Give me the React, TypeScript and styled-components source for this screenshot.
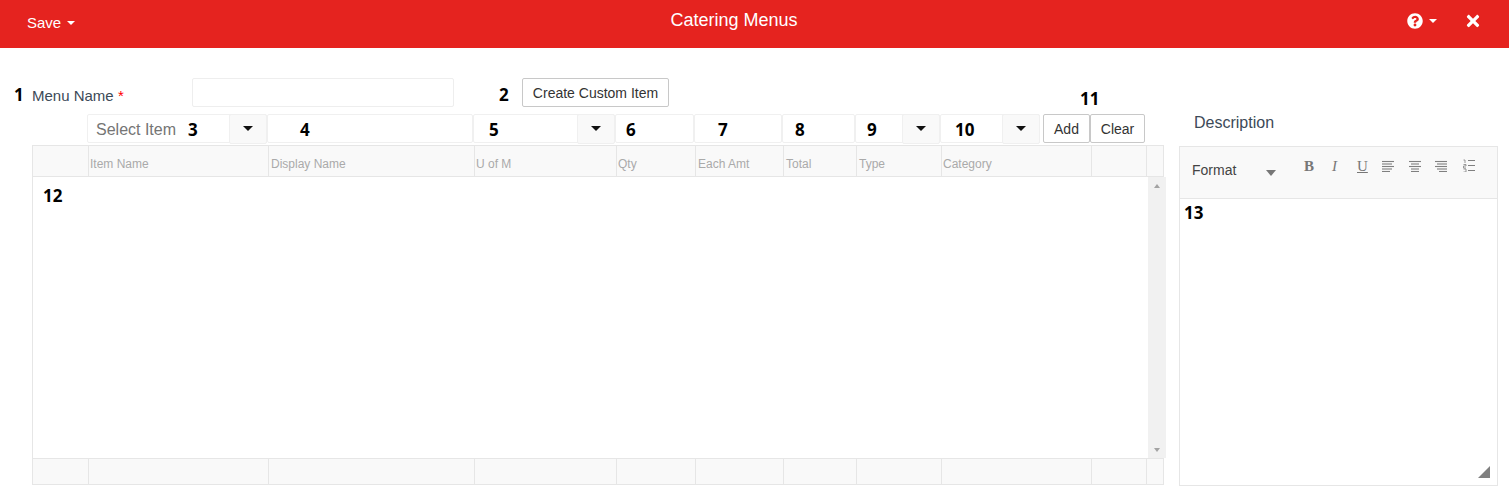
import styled, { createGlobalStyle } from 'styled-components';
import { FaQuestionCircle, FaTimes } from 'react-icons/fa';

const GlobalStyle = createGlobalStyle`
  html, body {
    margin: 0;
    padding: 0;
    background: #fff;
    font-family: "Liberation Sans", Arial, sans-serif;
    color: #333;
    overflow: hidden;
  }
`;

const Header = styled.header`
  height: 48px;
  background: #e5231f;
  color: #fff;
  display: grid;
  grid-template-columns: 1fr auto 1fr;
  align-items: center;
`;

const SaveMenu = styled.div`
  display: flex;
  align-items: center;
  gap: 6px;
  padding: 0 0 3px 27px;
  font-size: 15px;
`;

const Title = styled.h1`
  margin: -8px 0 0 -41px;
  font-size: 18px;
  font-weight: 400;
`;

const HeaderActions = styled.div`
  display: flex;
  justify-content: flex-end;
  align-items: center;
  padding: 0 27px 7px 0;
  font-size: 16px;
`;

const HelpMenu = styled.div`
  display: flex;
  align-items: center;
  gap: 6px;
  margin-right: 27px;
`;

const Caret = styled.span`
  display: inline-block;
  width: 0;
  height: 0;
  border-left: 4px solid transparent;
  border-right: 4px solid transparent;
  border-top: 4px solid #fff;
`;

const Content = styled.main`
  display: flex;
  padding: 30px 11px 0 14px;
`;

const Left = styled.div`
  width: 1150px;
  flex: none;
`;

const Right = styled.aside`
  margin: 68px 0 0 15px;
  flex: 1;
`;

const NameRow = styled.div`
  display: flex;
  align-items: center;
  height: 29px;
  margin-bottom: 7px;
`;

const Mark = styled.span`
  font-family: "Open Sans", "Liberation Sans", sans-serif;
  font-size: 17px;
  font-weight: 700;
  line-height: 1;
  color: #000;
`;

const NameMark = styled(Mark)`
  width: 18px;
  margin-top: 4px;
`;

const FieldMark = styled(Mark)`
  margin-top: 2px;
`;

const Label = styled.label`
  width: 160px;
  margin-top: 5px;
  font-size: 15px;
  color: #3c4a58;
`;

const Required = styled.span`
  color: #f00;
`;

const TextBox = styled.div`
  box-sizing: border-box;
  width: 262px;
  height: 29px;
  border: 1px solid #eee;
  border-radius: 2px;
`;

const CustomMark = styled(Mark)`
  width: 23px;
  margin: 4px 0 0 45px;
`;

const Button = styled.button<{ $w: number }>`
  box-sizing: border-box;
  height: 29px;
  padding: 0;
  width: ${(p) => p.$w}px;
  background: #fff;
  border: 1px solid #c8c8c8;
  border-radius: 2px;
  font: 14px "Liberation Sans", Arial, sans-serif;
  color: #333;
`;

const EntryRow = styled.div`
  display: flex;
  height: 30px;
  margin-left: 73px;
  margin-bottom: 1px;
`;

const Field = styled.div<{ $w: number; $pad: number }>`
  box-sizing: border-box;
  width: ${(p) => p.$w}px;
  height: 29px;
  flex: none;
  display: flex;
  align-items: center;
  padding-left: ${(p) => p.$pad}px;
  border: 1px solid #f0f0f0;
  border-radius: 2px;
`;

const Placeholder = styled.span`
  width: 92px;
  margin-top: 2px;
  font-size: 16px;
  color: #757575;
`;

const DropButton = styled.div`
  box-sizing: border-box;
  width: 38px;
  height: 30px;
  flex: none;
  margin-left: auto;
  margin-right: -1px;
  display: flex;
  align-items: center;
  justify-content: center;
  padding-bottom: 1px;
  background: #f9f9f9;
  border: 1px solid #f0f0f0;
  border-radius: 2px;
`;

const DarkCaret = styled.span`
  width: 0;
  height: 0;
  border-left: 5px solid transparent;
  border-right: 5px solid transparent;
  border-top: 5px solid #111;
`;

const AddGroup = styled.div`
  position: relative;
  display: flex;
  margin-left: 3px;
`;

const AddMark = styled(Mark)`
  position: absolute;
  left: 37px;
  top: -24px;
`;

const Grid = styled.section`
  box-sizing: border-box;
  width: 1132px;
  height: 340px;
  margin-left: 18px;
  border: 1px solid #e6e6e6;
  display: flex;
  flex-direction: column;
`;

const GridRow = styled.div<{ $h: number }>`
  display: flex;
  height: ${(p) => p.$h}px;
  flex: none;
  background: #f9f9f9;
`;

const HeadCell = styled.div<{ $w: number; $pad?: number }>`
  box-sizing: border-box;
  width: ${(p) => p.$w}px;
  flex: none;
  padding: 5px 0 0 ${(p) => p.$pad ?? 2}px;
  display: flex;
  align-items: center;
  border-right: 1px solid #e6e6e6;
  font-size: 12px;
  color: #aaa;
  &:last-child {
    border-right: 0;
  }
`;

const GridBody = styled.div`
  flex: 1;
  display: flex;
  border-top: 1px solid #e6e6e6;
  border-bottom: 1px solid #e6e6e6;
`;

const BodyArea = styled.div`
  flex: 1;
  padding: 10px 0 0 10px;
`;

const Scrollbar = styled.div`
  width: 18px;
  margin-right: -3px;
  background: #f1f1f1;
  display: flex;
  flex-direction: column;
  justify-content: space-between;
  align-items: center;
  padding: 7px 0 6px;
  box-sizing: border-box;
`;

const ScrollArrow = styled.span<{ $up?: boolean }>`
  width: 0;
  height: 0;
  border-left: 3.5px solid transparent;
  border-right: 3.5px solid transparent;
  ${(p) => (p.$up ? 'border-bottom: 4px solid #a3a3a3;' : 'border-top: 4px solid #a3a3a3;')}
`;

const DescriptionTitle = styled.div`
  height: 0;
  padding-left: 15px;
  font-size: 16px;
  position: relative;
  top: -32px;
  color: #3c4a58;
`;

const Editor = styled.section`
  box-sizing: border-box;
  width: 319px;
  height: 340px;
  border: 1px solid #e6e6e6;
  display: flex;
  flex-direction: column;
`;

const EditorToolbar = styled.div`
  box-sizing: border-box;
  height: 52px;
  flex: none;
  background: #f9f9f9;
  border-bottom: 1px solid #e6e6e6;
  display: flex;
  align-items: flex-start;
  padding-left: 12px;
`;

const FormatLabel = styled.span`
  width: 74px;
  margin-top: 15px;
  font-size: 14px;
  color: #444;
`;

const FormatCaret = styled.span`
  width: 0;
  height: 0;
  margin: 23px 27px 0 0;
  border-left: 5px solid transparent;
  border-right: 5px solid transparent;
  border-top: 6px solid #777;
`;

const ToolGlyph = styled.span<{ $w: number; $bold?: boolean; $italic?: boolean; $under?: boolean }>`
  width: ${(p) => p.$w}px;
  margin-top: 11px;
  padding-left: 1px;
  box-sizing: border-box;
  font-family: "Liberation Serif", "Times New Roman", serif;
  font-size: 15px;
  line-height: 16px;
  color: #777;
  font-weight: ${(p) => (p.$bold ? 700 : 400)};
  font-style: ${(p) => (p.$italic ? 'italic' : 'normal')};
  text-decoration: ${(p) => (p.$under ? 'underline' : 'none')};
`;

const ToolIcon = styled.svg`
  width: 13px;
  height: 13px;
  margin: 12px 13.5px 0 0;
  flex: none;
`;

const EditorBody = styled.div`
  flex: 1;
  position: relative;
  padding: 5px 0 0 4px;
`;

const ResizeGrip = styled.svg`
  position: absolute;
  right: 7px;
  bottom: 7px;
  width: 12px;
  height: 12px;
`;

const columns = [
  { w: 56, label: '' },
  { w: 180, label: 'Item Name', pad: 1 },
  { w: 206, label: 'Display Name' },
  { w: 142, label: 'U of M', pad: 1 },
  { w: 79, label: 'Qty', pad: 1 },
  { w: 88, label: 'Each Amt' },
  { w: 73, label: 'Total' },
  { w: 85, label: 'Type' },
  { w: 150, label: 'Category', pad: 1 },
  { w: 55, label: '' },
  { w: 16, label: '' },
];

const alignLines: Record<string, [number, number][]> = {
  left: [[0, 12], [0, 10], [0, 12], [0, 10], [0, 8]],
  center: [[0, 12], [2, 10], [0, 12], [2, 10], [2, 10]],
  right: [[0, 12], [2, 12], [0, 12], [2, 12], [4, 12]],
};

const AlignIcon = ({ kind }: { kind: string }) => (
  <ToolIcon viewBox="0 0 13 13">
    {alignLines[kind].map(([x1, x2], i) => (
      <line key={i} x1={x1} x2={x2} y1={2.5 + i * 2.5} y2={2.5 + i * 2.5} stroke="#808080" strokeWidth="1.1" />
    ))}
  </ToolIcon>
);

const ListIcon = () => (
  <ToolIcon viewBox="0 0 13 13">
    <path d="M1.5 1h1.5v3M1.5 5.5h2.5v1.5h-2.5v2h2.5M1.5 10h2.5v3h-2.5" fill="none" stroke="#808080" strokeWidth="0.8" />
    <line x1="6" x2="14" y1="1.5" y2="1.5" stroke="#808080" />
    <line x1="6" x2="14" y1="6.5" y2="6.5" stroke="#808080" />
    <line x1="6" x2="14" y1="11.5" y2="11.5" stroke="#808080" />
  </ToolIcon>
);

const App = () => (
  <>
    <GlobalStyle />
    <Header>
      <SaveMenu>
        Save <Caret />
      </SaveMenu>
      <Title>Catering Menus</Title>
      <HeaderActions>
        <HelpMenu>
          <FaQuestionCircle size={16} />
          <Caret />
        </HelpMenu>
        <FaTimes size={18} />
      </HeaderActions>
    </Header>
    <Content>
      <Left>
        <NameRow>
          <NameMark>1</NameMark>
          <Label>
            Menu Name <Required>*</Required>
          </Label>
          <TextBox />
          <CustomMark>2</CustomMark>
          <Button $w={147}>Create Custom Item</Button>
        </NameRow>
        <EntryRow>
          <Field $w={180} $pad={8}>
            <Placeholder>Select Item</Placeholder>
            <FieldMark>3</FieldMark>
            <DropButton>
              <DarkCaret />
            </DropButton>
          </Field>
          <Field $w={206} $pad={32}>
            <FieldMark>4</FieldMark>
          </Field>
          <Field $w={142} $pad={15}>
            <FieldMark>5</FieldMark>
            <DropButton>
              <DarkCaret />
            </DropButton>
          </Field>
          <Field $w={79} $pad={10}>
            <FieldMark>6</FieldMark>
          </Field>
          <Field $w={88} $pad={23}>
            <FieldMark>7</FieldMark>
          </Field>
          <Field $w={73} $pad={12}>
            <FieldMark>8</FieldMark>
          </Field>
          <Field $w={85} $pad={11}>
            <FieldMark>9</FieldMark>
            <DropButton>
              <DarkCaret />
            </DropButton>
          </Field>
          <Field $w={100} $pad={14}>
            <FieldMark>10</FieldMark>
            <DropButton>
              <DarkCaret />
            </DropButton>
          </Field>
          <AddGroup>
            <AddMark>11</AddMark>
            <Button $w={47}>Add</Button>
            <Button $w={55}>Clear</Button>
          </AddGroup>
        </EntryRow>
        <Grid>
          <GridRow $h={30}>
            {columns.map((c, i) => (
              <HeadCell key={`head-${i}`} $w={c.w} $pad={c.pad}>
                {c.label}
              </HeadCell>
            ))}
          </GridRow>
          <GridBody>
            <BodyArea>
              <Mark>12</Mark>
            </BodyArea>
            <Scrollbar>
              <ScrollArrow $up />
              <ScrollArrow />
            </Scrollbar>
          </GridBody>
          <GridRow $h={25}>
            {columns.map((c, i) => (
              <HeadCell key={`foot-${i}`} $w={c.w} />
            ))}
          </GridRow>
        </Grid>
      </Left>
      <Right>
        <DescriptionTitle>Description</DescriptionTitle>
        <Editor>
          <EditorToolbar>
            <FormatLabel>Format</FormatLabel>
            <FormatCaret />
            <ToolGlyph $w={28} $bold>B</ToolGlyph>
            <ToolGlyph $w={25} $italic>I</ToolGlyph>
            <ToolGlyph $w={26} $under>U</ToolGlyph>
            <AlignIcon kind="left" />
            <AlignIcon kind="center" />
            <AlignIcon kind="right" />
            <ListIcon />
          </EditorToolbar>
          <EditorBody>
            <Mark>13</Mark>
            <ResizeGrip viewBox="0 0 12 12">
              <path d="M12 0V12H0Z" fill="#808080" />
            </ResizeGrip>
          </EditorBody>
        </Editor>
      </Right>
    </Content>
  </>
);

export default App;
